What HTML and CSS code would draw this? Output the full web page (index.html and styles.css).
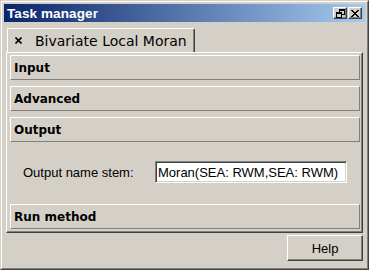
FILE: index.html
```html
<!DOCTYPE html>
<html>
<head>
<meta charset="utf-8">
<link rel="stylesheet" href="styles.css">
</head>
<body>
<div class="win">
  <div class="frame">
    <div class="title">
      <span class="ttext">Task manager</span>
      <div class="tbtns">
        <span class="tbtn"><svg width="9" height="9" viewBox="0 0 9 9" shape-rendering="crispEdges"><path d="M3 0h6v2h-6z M8 2h1v4h-1z M3 2h1v1h-1z M6 5h3v1h-3z M0 3h6v2h-6z M0 5h1v4h-1z M5 5h1v4h-1z M0 8h6v1h-6z" fill="#000"/></svg></span>
        <span class="tbtn"><svg width="8" height="7" viewBox="0 0 8 7" shape-rendering="crispEdges"><path d="M0 0h2v1h-2z M6 0h2v1h-2z M1 1h2v1h-2z M5 1h2v1h-2z M2 2h4v1h-4z M3 3h2v1h-2z M2 4h4v1h-4z M1 5h2v1h-2z M5 5h2v1h-2z M0 6h2v1h-2z M6 6h2v1h-2z" fill="#000"/></svg></span>
      </div>
    </div>
    <div class="body">
      <div class="tabs">
        <div class="tab">
          <svg class="tx" width="7" height="7" viewBox="0 0 7 7"><path d="M0.5 0.5L6.5 6.5M6.5 0.5L0.5 6.5" stroke="#000" stroke-width="1.6"/></svg>
          <span>Bivariate Local Moran</span>
        </div>
      </div>
      <div class="panel">
        <div class="sec">Input</div>
        <div class="sec">Advanced</div>
        <div class="sec">Output</div>
        <div class="out">
          <span class="lbl">Output name stem:</span>
          <div class="field">Moran(SEA: RWM,SEA: RWM)</div>
        </div>
        <div class="sec">Run method</div>
      </div>
      <div class="foot">
        <button class="help">Help</button>
      </div>
    </div>
  </div>
</div>
</body>
</html>
```
FILE: styles.css
```css
html, body {
  margin: 0;
  padding: 0;
  background: #d4d0c8;
}

.win {
  width: 369px;
  height: 270px;
  box-sizing: border-box;
  border: 1px solid;
  border-color: #d4d0c8 #404040 #404040 #d4d0c8;
  background: #d4d0c8;
}

.frame {
  height: 100%;
  box-sizing: border-box;
  border: 1px solid;
  border-color: #fff #808080 #808080 #fff;
  padding: 2px;
  display: flex;
  flex-direction: column;
}

.title {
  height: 18px;
  flex: none;
  background: linear-gradient(to right, #0a246a, #a6caf0);
  display: flex;
  align-items: center;
  justify-content: space-between;
  padding: 0 3px 0 3px;
}

.ttext {
  color: #fff;
  font: bold 13.5px "Liberation Sans", Arial, sans-serif;
  letter-spacing: 0.1px;
}

.tbtns {
  display: flex;
  gap: 1px;
}

.tbtn {
  width: 14px;
  height: 12px;
  box-sizing: border-box;
  background: #d4d0c8;
  border: 1px solid;
  border-color: #fff #404040 #404040 #fff;
  box-shadow: inset -1px -1px #808080;
  display: flex;
  align-items: center;
  justify-content: center;
}

.tbtn svg {
  display: block;
}

.body {
  flex: 1;
  display: flex;
  flex-direction: column;
  padding: 6px 2px 0 2px;
}

.tabs {
  display: flex;
  padding-left: 1px;
  height: 24px;
}

.tab {
  width: 188px;
  box-sizing: border-box;
  border: 1px solid;
  border-bottom: none;
  border-color: #fff #404040 transparent #fff;
  box-shadow: inset -1px 0 #808080;
  border-radius: 2px 2px 0 0;
  display: flex;
  align-items: center;
  padding-left: 7px;
  gap: 13px;
  font: 14px "DejaVu Sans", Verdana, sans-serif;
  color: #000;
}

.tx {
  display: block;
}

.panel {
  border: 1px solid;
  border-color: #fff #404040 #404040 #fff;
  box-shadow: inset -1px -1px #808080;
  padding: 2px 2px 3px 3px;
  display: flex;
  flex-direction: column;
  gap: 6px;
}

.sec {
  height: 25px;
  box-sizing: border-box;
  border: 1px solid;
  border-color: #fff #808080 #808080 #fff;
  display: flex;
  align-items: center;
  padding-left: 3px;
  font: bold 12px "DejaVu Sans", Verdana, sans-serif;
  color: #000;
}

.out {
  height: 50px;
  box-sizing: border-box;
  display: flex;
  align-items: center;
  padding: 13px 0 15px 13px;
}

.lbl {
  width: 132px;
  font: 13px "Liberation Sans", Arial, sans-serif;
  color: #000;
}

.field {
  width: 192px;
  height: 22px;
  box-sizing: border-box;
  border: 1px solid;
  border-color: #808080 #fff #fff #808080;
  box-shadow: inset 1px 1px #404040, inset -1px -1px #d4d0c8;
  background: #fff;
  padding-left: 2px;
  display: flex;
  align-items: center;
  font: 13px "Liberation Sans", Arial, sans-serif;
  color: #000;
}

.foot {
  display: flex;
  justify-content: flex-end;
  margin-top: 2px;
}

.help {
  width: 76px;
  height: 26px;
  box-sizing: border-box;
  border: 1px solid;
  border-color: #fff #404040 #404040 #fff;
  box-shadow: inset -1px -1px #808080;
  background: #d4d0c8;
  padding: 0;
  font: 13px "Liberation Sans", Arial, sans-serif;
  color: #000;
}
```
